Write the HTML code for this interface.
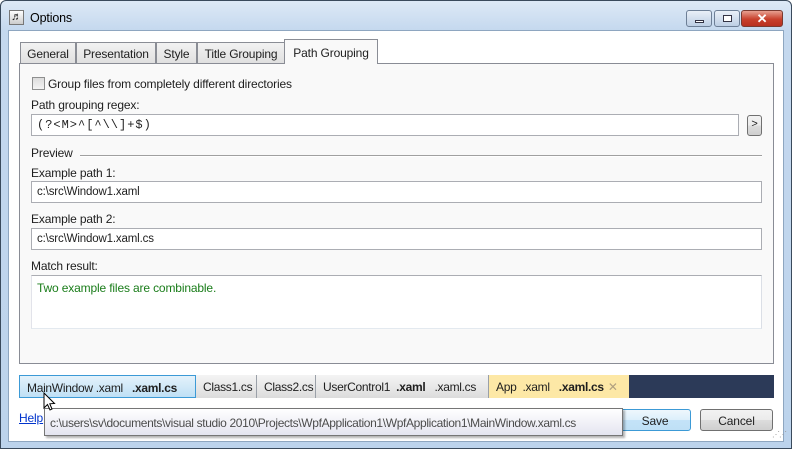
<!DOCTYPE html>
<html><head><style>
*{box-sizing:border-box;margin:0;padding:0}
body{width:792px;height:449px;overflow:hidden;font-family:"Liberation Sans",sans-serif;font-size:12px;color:#1e1e1e;background:#fff;letter-spacing:-0.15px}
.a{position:absolute}
#win{left:0;top:0;width:792px;height:449px;border:1px solid #3a4a5c;border-radius:6px 6px 0 0;background:linear-gradient(#dde9f6,#c4d8ee 30px,#bcd3ec);}
#client{left:8px;top:30px;width:776px;height:412px;background:#fff;border:1px solid #8ea6c0}
.tab{top:42px;height:21px;border:1px solid #8a8d95;border-bottom:none;background:linear-gradient(#f2f2f2,#e0e0e0);padding:4px 0 0;text-align:center;white-space:nowrap;font-size:12px}
.tb{height:22px;border:1px solid #abadb3;background:#fff;padding:4px 5px;font-size:11.5px;white-space:nowrap}
.dt{top:375px;height:23px;border-right:1px solid #9aa0a8;background:linear-gradient(#f4f4f4,#dcdcdc);padding:5px 0 0 7px;white-space:nowrap;font-size:12px;overflow:hidden;letter-spacing:-0.3px}
.btn{height:22px;border:1px solid #707070;border-radius:3px;background:linear-gradient(#f2f2f2,#ebebeb 50%,#dddddd 50%,#cfcfcf);text-align:center;padding-top:4px;font-size:12px}
</style></head><body>
<div id="win" class="a"></div>
<div class="a" style="left:9px;top:10px;width:15px;height:15px;border:1px solid #777;background:linear-gradient(#fff,#ccc);font-size:11px;line-height:12px;text-align:center">♬</div>
<div class="a" style="left:30px;top:11px;font-size:12.5px;color:#000">Options</div>
<div class="a" style="left:686px;top:10px;width:26px;height:17px;border:1px solid #6d7f96;border-radius:3px;background:linear-gradient(#e9f0f8,#bccee4)"><div class="a" style="left:8px;top:9px;width:9px;height:3px;border:1px solid #334;background:#fff"></div></div>
<div class="a" style="left:714px;top:10px;width:26px;height:17px;border:1px solid #6d7f96;border-radius:3px;background:linear-gradient(#e9f0f8,#bccee4)"><div class="a" style="left:8px;top:4px;width:9px;height:7px;border:1px solid #334;background:#fff"></div></div>
<div class="a" style="left:741px;top:10px;width:42px;height:17px;border:1px solid #7a3a30;border-radius:3px;background:linear-gradient(#e8a090,#c8402c 55%,#b83020);color:#fff;font-weight:bold;text-align:center;font-size:13px;line-height:15px">✕</div>
<div id="client" class="a"></div>

<div class="a" style="left:19px;top:63px;width:755px;height:301px;border:1px solid #898c95;background:#f9f9f9"></div>
<div class="a tab" style="left:20px;width:56px">General</div>
<div class="a tab" style="left:76px;width:80px">Presentation</div>
<div class="a tab" style="left:156px;width:41px">Style</div>
<div class="a tab" style="left:197px;width:88px">Title Grouping</div>
<div class="a tab" style="left:284px;top:39px;height:25px;width:94px;background:#f9f9f9;padding-top:6px">Path Grouping</div>

<div class="a" style="left:32px;top:77px;width:13px;height:13px;border:1px solid #8e8f8f;background:linear-gradient(#dcdcdc,#f4f4f4)"></div>
<div class="a" style="left:48px;top:77px">Group files from completely different directories</div>
<div class="a" style="left:31px;top:98px">Path grouping regex:</div>
<div class="a tb" style="left:31px;top:114px;width:708px;font-family:'Liberation Mono',monospace;font-size:12px;letter-spacing:1px;padding-top:3px">(?&lt;M&gt;^[^\\]+$)</div>
<div class="a btn" style="left:747px;top:115px;width:15px;height:21px;padding-top:2px;font-size:11px">&gt;</div>
<div class="a" style="left:31px;top:146px">Preview</div>
<div class="a" style="left:80px;top:155px;width:682px;height:2px;border-top:1px solid #a0a0a0;border-bottom:1px solid #fff"></div>
<div class="a" style="left:31px;top:166px">Example path 1:</div>
<div class="a tb" style="left:31px;top:181px;width:731px">c:\src\Window1.xaml</div>
<div class="a" style="left:31px;top:212px">Example path 2:</div>
<div class="a tb" style="left:31px;top:228px;width:731px">c:\src\Window1.xaml.cs</div>
<div class="a" style="left:31px;top:259px">Match result:</div>
<div class="a tb" style="left:31px;top:275px;width:731px;height:54px;border-color:#abadb3 #dbdfe6 #e3e9ef #e2e3ea;color:#1a7d1a;font-size:12px;padding-top:5px">Two example files are combinable.</div>

<div class="a" style="left:19px;top:375px;width:755px;height:23px;background:#2c3a58"></div>
<div class="a dt" style="left:19px;width:177px;background:linear-gradient(#e4f2fb,#bfe0f5);border:1px solid #3c9ad6">MainWindow&nbsp;.xaml&nbsp;&nbsp; <b>.xaml.cs</b></div>
<div class="a dt" style="left:196px;width:61px">Class1.cs</div>
<div class="a dt" style="left:257px;width:59px">Class2.cs</div>
<div class="a dt" style="left:316px;width:173px">UserControl1&nbsp; <b>.xaml</b>&nbsp;&nbsp; .xaml.cs</div>
<div class="a dt" style="left:489px;width:140px;background:#fde8a6;border:none">App&nbsp; .xaml&nbsp;&nbsp; <b>.xaml.cs</b> <span style="color:#b0a080;margin-left:1px">✕</span></div>

<div class="a" style="left:19px;top:411px;color:#0033cc;text-decoration:underline">Help</div>
<div class="a btn" style="left:619px;top:409px;width:72px;border-color:#3c9ad6;background:linear-gradient(#eef7fd,#dceffb 50%,#c4e3f8 50%,#bfe0f6)">Save</div>
<div class="a btn" style="left:700px;top:409px;width:73px">Cancel</div>
<div class="a" style="left:44px;top:408px;width:579px;height:28px;border:1px solid #767676;background:linear-gradient(#fff,#e4e5f0);box-shadow:2px 2px 2px rgba(0,0,0,.3);padding:7px 5px;font-size:12px;letter-spacing:-0.35px;color:#4c4c4c;white-space:nowrap">c:\users\sv\documents\visual studio 2010\Projects\WpfApplication1\WpfApplication1\MainWindow.xaml.cs</div>
<svg class="a" style="left:43px;top:392px" width="14" height="20" viewBox="0 0 14 20"><path d="M1 1 L1 16 L4.5 12.5 L7 18 L9 17 L6.8 11.8 L11.5 11.5 Z" fill="#fff" stroke="#000" stroke-width="1"/></svg>
<div class="a" style="left:772px;top:430px;color:#999;font-size:8px;letter-spacing:-1px">⋰⋰</div>
</body></html>
